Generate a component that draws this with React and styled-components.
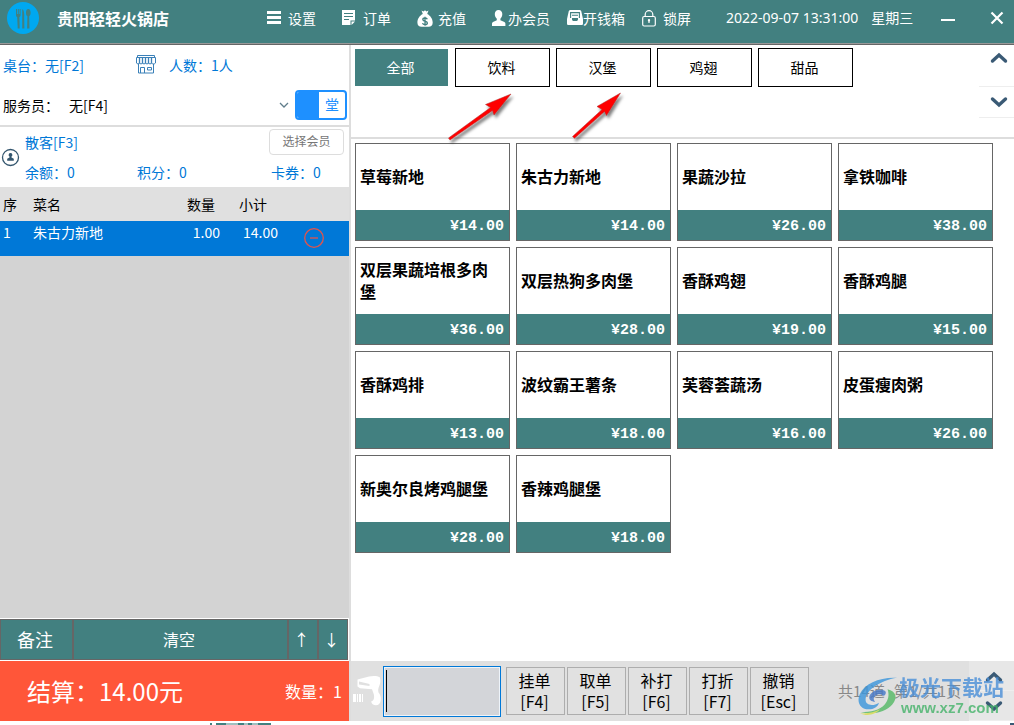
import React, { useState } from "react";
import styled, { createGlobalStyle } from "styled-components";

const teal = "#428080";
const blue = "#0078d7";
const sans = "'Noto Sans CJK SC', 'Noto Sans', sans-serif";

const GlobalStyle = createGlobalStyle`
  * {
    box-sizing: border-box;
  }
  body {
    margin: 0;
    background: #fff;
    color: #000;
    font-family: ${sans};
    font-size: 14px;
    line-height: 20px;
  }
  button, input, select {
    font: inherit;
    color: inherit;
    margin: 0;
    padding: 0;
    border: 0;
    border-radius: 0;
    background: none;
  }
  button {
    cursor: pointer;
  }
  svg {
    display: block;
    flex: none;
  }
`;

const Page = styled.div`
  min-height: 100vh;
  display: flex;
  flex-direction: column;
`;

/* ---------- header ---------- */

const Header = styled.header`
  display: flex;
  align-items: center;
  height: 45px;
  padding: 0 0 8px 7px;
  background: ${teal};
  color: #fff;
  border-bottom: 1px solid #666;
  box-shadow: inset 0 -1px #999;
`;

const Brand = styled.div`
  display: flex;
  align-items: center;
  gap: 18px;
  width: 260px;
`;

const BrandName = styled.h1`
  margin: 0;
  font-size: 16px;
  font-weight: 700;
`;

const Nav = styled.nav`
  display: grid;
  grid-template-columns: repeat(6, 75px);
`;

const NavButton = styled.button`
  display: flex;
  align-items: center;
  gap: ${(p) => (p.$tight ? 0 : 5)}px;
  white-space: nowrap;
`;

const Clock = styled.div`
  display: flex;
  gap: 13px;
  padding-left: 9px;
  font-family: "Noto Sans", ${sans};
  white-space: nowrap;
`;

const WindowControls = styled.div`
  display: flex;
  gap: 15px;
  margin-left: auto;
`;

const WindowButton = styled.button`
  display: grid;
  place-items: center;
  width: 34px;
  height: 34px;
`;

/* ---------- layout ---------- */

const Main = styled.main`
  flex: 1;
  display: flex;
`;

const OrderPanel = styled.section`
  flex: 0 0 351px;
  display: flex;
  flex-direction: column;
  border-right: 2px solid #ddd;
`;

const MenuPanel = styled.section`
  flex: 1;
  min-width: 0;
  display: flex;
  flex-direction: column;
`;

/* ---------- table and staff ---------- */

const TableRow = styled.div`
  display: flex;
  align-items: center;
  height: 41px;
  padding: 0 0 2px 3px;
  color: ${blue};
`;

const LinkButton = styled.button`
  text-align: left;
  white-space: nowrap;
`;

const TableName = styled(LinkButton)`
  width: 133px;
`;

const GuestButton = styled(LinkButton)`
  display: flex;
  align-items: center;
  gap: 13px;
`;

const StaffRow = styled.div`
  display: flex;
  align-items: center;
  height: 41px;
  padding: 0 2px 2px 3px;
  border-bottom: 2px solid #ddd;
`;

const SelectWrap = styled.div`
  position: relative;
  flex: 1;
  margin: 0 4px 0 10px;
`;

const StaffSelect = styled.select`
  appearance: none;
  width: 100%;
  height: 28px;
  outline: none;
`;

const SelectArrow = styled.svg`
  position: absolute;
  right: 2px;
  top: 11px;
  pointer-events: none;
`;

const Switch = styled.label`
  display: grid;
  grid-template-columns: 22px 1fr;
  width: 52px;
  height: 30px;
  border: 2px solid #1e90ff;
  border-radius: 4px;
  overflow: hidden;
  color: #1e90ff;
  cursor: pointer;
`;

const SwitchInput = styled.input`
  appearance: none;
  background: #1e90ff;
  cursor: pointer;
`;

const SwitchText = styled.span`
  display: grid;
  place-items: center;
  padding-bottom: 2px;
`;

/* ---------- member ---------- */

const Member = styled.div`
  display: flex;
  align-items: center;
  gap: 5px;
  height: 60px;
  padding: 0 5px 0 1px;
  color: ${blue};
`;

const MemberInfo = styled.div`
  flex: 1;
  display: flex;
  flex-direction: column;
  justify-content: space-between;
  height: 56px;
`;

const MemberTop = styled.div`
  display: flex;
  align-items: center;
  justify-content: space-between;
`;

const MemberPick = styled.button`
  width: 75px;
  height: 26px;
  padding-bottom: 2px;
  border: 1px solid #ddd;
  border-radius: 4px;
  color: #777;
  font-size: 12px;
`;

const Balances = styled.div`
  display: grid;
  grid-template-columns: 112px 134px 1fr;
  height: 23px;
`;

/* ---------- order lines ---------- */

const Lines = styled.div`
  flex: 1;
  background: #d3d3d3;
`;

const LineTable = styled.table`
  width: 100%;
  table-layout: fixed;
  border-collapse: collapse;
`;

const Th = styled.th`
  width: ${(p) => p.$width}px;
  height: 34px;
  padding: 0 0 0 ${(p) => p.$pad || 0}px;
  background: #e0e0e0;
  font-weight: 400;
  text-align: left;
`;

const Td = styled.td`
  height: 35px;
  padding: 1px ${(p) => p.$end || 0}px 0 ${(p) => p.$pad || 0}px;
  vertical-align: top;
  text-align: ${(p) => (p.$end ? "right" : "left")};
  background: ${blue};
  color: #fff;
`;

const RemoveButton = styled.button`
  display: block;
  margin-top: 6px;
`;

const LineActions = styled.div`
  display: grid;
  grid-template-columns: 73px 1fr 30px 30px;
  height: 43px;
  padding: 1px 1px 1px 0;
`;

const LineAction = styled.button`
  padding: 0 3px 2px 0;
  border: 1px solid #666;
  background: ${teal};
  color: #fff;
  font-size: ${(p) => (p.$large ? 18 : 16)}px;
`;

const Total = styled.button`
  display: flex;
  align-items: center;
  justify-content: space-between;
  height: 60px;
  padding: 0 7px 0 27px;
  background: #ff5639;
  color: #fff;
  font-size: 16px;
`;

const Amount = styled.span`
  font-size: 24px;
`;

/* ---------- categories ---------- */

const CategoryBar = styled.div`
  position: relative;
  display: flex;
  justify-content: space-between;
  height: 94px;
  border-bottom: 2px solid #ddd;
`;

const Categories = styled.div`
  display: flex;
  flex-wrap: wrap;
  align-content: flex-start;
  gap: 6px;
  padding: 3px;
`;

const Category = styled.button`
  width: 95px;
  height: 39px;
  padding: 0 2px 2px 0;
  border: 1px solid ${(p) => (p.$active ? "#fff" : "#000")};
  background: ${(p) => (p.$active ? teal : "#fff")};
  background-clip: padding-box;
  color: ${(p) => (p.$active ? "#fff" : "#000")};
`;

const Pager = styled.div`
  display: flex;
  flex-direction: column;
  width: 35px;
`;

const PagerButton = styled.button`
  display: grid;
  place-items: center;
  height: ${(p) => p.$height}px;
  padding: ${(p) => p.$pad || "0"};
  border-bottom: 1px solid #eee;
`;

const Pointers = styled.svg`
  position: absolute;
  left: 90px;
  top: 40px;
  pointer-events: none;
`;

/* ---------- dishes ---------- */

const DishArea = styled.div`
  flex: 1;
  padding: 4px 21px 4px 4px;
`;

const DishGrid = styled.div`
  display: grid;
  grid-template-columns: repeat(4, 1fr);
  gap: 6px;
`;

const DishCard = styled.button`
  display: flex;
  flex-direction: column;
  border: 1px solid #666;
  text-align: left;
`;

const DishName = styled.span`
  display: flex;
  align-items: center;
  width: 100%;
  height: 66px;
  padding: 0 16px 2px 4px;
  font-size: 16px;
  line-height: 22px;
  font-weight: 700;
`;

const DishPrice = styled.span`
  width: 100%;
  height: 30px;
  padding-right: 5px;
  background: ${teal};
  color: #fff;
  font-family: "Liberation Mono", monospace;
  font-size: 15px;
  line-height: 34px;
  font-weight: 700;
  text-align: right;
`;

/* ---------- footer ---------- */

const Footer = styled.footer`
  position: relative;
  display: flex;
  align-items: center;
  height: 60px;
  padding-left: 2px;
  background: #e0e0e0;
`;

const ScanBox = styled.div`
  position: relative;
  flex: 0 1 118px;
  margin: 0 5px 0 0;
`;

const ScanInput = styled.input`
  display: block;
  width: 100%;
  height: 51px;
  padding: 0 4px;
  border: 1px solid ${blue};
  box-shadow: inset 0 0 0 1px #eef4fa;
  background: #d3d5d9;
  outline: none;
  caret-color: transparent;
`;

const Caret = styled.i`
  position: absolute;
  left: 3px;
  top: 4px;
  width: 1px;
  height: 42px;
  background: #000;
`;

const Commands = styled.div`
  display: flex;
  gap: 2px;
`;

const Command = styled.button`
  display: flex;
  flex-direction: column;
  align-items: center;
  justify-content: center;
  width: 59px;
  height: 48px;
  padding-right: 2px;
  border: 1px solid #adadad;
  background: #e1e1e1;
  font-size: 16px;
  line-height: 21px;
`;

const PageInfo = styled.div`
  display: flex;
  gap: 9px;
  padding-left: 29px;
  color: #888;
  font-size: 15px;
  white-space: nowrap;
`;

const FooterPager = styled.div`
  display: flex;
  flex-direction: column;
  width: 45px;
  margin-left: auto;
  background: #e7e7e7;
`;

const Watermark = styled.div`
  position: absolute;
  right: 10px;
  top: 13px;
  display: flex;
  align-items: center;
  opacity: 0.8;
  pointer-events: none;
`;

const WatermarkText = styled.div`
  display: flex;
  flex-direction: column;
  color: #4a8fd8;
  font-size: 21px;
  line-height: 25px;
  font-weight: 700;
`;

const WatermarkUrl = styled.span`
  padding-left: 2px;
  color: #45b36a;
  font-family: "Liberation Sans", Arial, sans-serif;
  font-size: 15px;
  line-height: 18px;
`;

const BottomEdge = styled.div`
  display: flex;
  justify-content: space-between;
  height: 4px;
  padding: 2px 0 0 210px;
`;

/* ---------- icons ---------- */

const LogoIcon = () => (
  <svg width="32" height="32" viewBox="0 0 32 32">
    <circle cx="16" cy="16" r="16" fill="#00a8f0" />
    <g fill={teal}>
      <path d="M9 7h1v5h.8V7h1v5h.8V7h1v6c0 1-.5 1.800-1.200 2.200l.3 11.300h-2L10.200 15.200C9.400 14.800 9 14 9 13z" />
      <path d="M15.500 7.200c1.500 1 2 4 1.700 8.300l.2 11h-2.200V7.200z" />
      <path d="M21.300 7c1.500 0 2.300 1.600 2.300 3.700 0 1.700-.6 3-1.400 3.600l.3 12.200h-2.400l.3-12.200c-.9-.6-1.400-1.900-1.400-3.600C19 8.600 19.800 7 21.300 7z" />
    </g>
  </svg>
);

const MenuIcon = () => (
  <svg width="16" height="16" viewBox="0 0 16 16" fill="#fff">
    <path d="M0 1h14v3H0zM0 6h14v3H0zM0 11h14v3H0z" />
  </svg>
);

const OrderIcon = () => (
  <svg width="16" height="16" viewBox="0 0 16 16">
    <path d="M0 0h13v10.500H8.500V15H0zM9.500 11.500H13L9.500 15z" fill="#fff" />
    <path d="M2 3.500h9M2 6.500h9M2 9.500h5" stroke={teal} />
  </svg>
);

const BagIcon = () => (
  <svg width="16" height="17" viewBox="0 0 16 17">
    <path
      d="M4.500.5l2 .9L8 .2l1.500 1.200 2-.9L10.200 4c3 1.400 5.500 4.800 5.500 8.500 0 3-1.700 4.300-4 4.300H4.500c-2.400 0-4.100-1.400-4.100-4.300C.4 8.800 2.800 5.400 5.800 4z"
      fill="#fff"
    />
    <path
      d="M10.300 9.300C10 8.400 9.200 8 8 8c-1.300 0-2.200.6-2.200 1.600 0 2.200 4.600 1.100 4.600 3.300 0 1-1 1.700-2.400 1.700-1.300 0-2.200-.5-2.500-1.500M8 6.800v9"
      fill="none"
      stroke={teal}
      strokeWidth="1.300"
    />
  </svg>
);

const PersonIcon = () => (
  <svg width="16" height="17" viewBox="0 0 16 17" fill="#fff">
    <path d="M6.500 0c2.400 0 3.800 1.700 3.800 4.100 0 1.900-.8 3.800-1.900 4.700v1.400l4 1.700c.7.400 1 .9 1 1.700V16H0v-2.400c0-.8.300-1.300 1-1.700l3.800-1.700V8.800C3.600 7.900 2.800 6 2.800 4.100 2.800 1.700 4.100 0 6.500 0z" />
  </svg>
);

const InboxIcon = () => (
  <svg width="16" height="16" viewBox="0 0 16 16">
    <path
      d="M3.500 0h9C13.600 0 14 .6 14.300 1.500L16 9v4.500c0 1-.6 1.500-1.500 1.500h-13C.6 15 0 14.500 0 13.500V9l1.700-7.500C2 .6 2.400 0 3.500 0z"
      fill="#fff"
    />
    <path d="M3.600 8V2.600h8.800V8M5 5.200h6" fill="none" stroke={teal} strokeWidth="1.100" />
    <path d="M5 8h6v1.200c0 1-.8 1.800-1.800 1.800H6.800C5.800 11 5 10.200 5 9.200z" fill={teal} />
  </svg>
);

const LockIcon = () => (
  <svg width="16" height="17" viewBox="0 0 16 17" fill="none" stroke="#fff" strokeWidth="1.200">
    <rect x="0.700" y="6.500" width="12.600" height="9.500" rx="1.500" />
    <path d="M3.200 6.500V4.500a3.800 3.800 0 0 1 7.600 0v2M7 10v3" />
    <circle cx="7" cy="10.300" r="0.600" />
  </svg>
);

const StoreIcon = () => (
  <svg width="20" height="19" viewBox="0 0 20 19" fill="none" stroke="#3a80b8" strokeWidth="1">
    <path d="M1.500 2V.5h17V2M.5 8V2.500h19V8M2.500 9v9h15V9M4.500 18v-5.500h4V18M11.500 12.500h4v2.500h-4z" />
    <path d="M3.500 2.500v6M6.500 2.500v6M9.500 2.500v6M12.500 2.500v6M15.500 2.500v6" strokeWidth="1.300" />
    <path d="M.5 8c.5 1.200 2.500 1.200 3 0 .5 1.200 2.500 1.200 3 0 .5 1.200 2.500 1.200 3 0 .5 1.200 2.500 1.200 3 0 .5 1.200 2.500 1.200 3 0 .5 1.200 3.500 1.200 4 0" />
  </svg>
);

const MemberIcon = () => (
  <svg width="19" height="19" viewBox="0 0 19 19">
    <circle cx="9.500" cy="9.500" r="8" fill="#fff" stroke="#34566e" strokeWidth="1.300" />
    <path d="M9.500 5a1.900 1.900 0 0 1 1 3.500v1l2.300 1.300v2H6.200v-2l2.300-1.300v-1A1.900 1.900 0 0 1 9.500 5z" fill="#34566e" />
  </svg>
);

const MinusIcon = () => (
  <svg width="20" height="20" viewBox="0 0 20 20" fill="none" stroke="#e2544b" strokeWidth="1.300">
    <circle cx="10" cy="10" r="9.300" />
    <path d="M6 10h8" />
  </svg>
);

const Chevron = ({ down }) => (
  <svg width="18" height="12" viewBox="0 0 18 12" fill="none" stroke="#3a5a75" strokeWidth="3.400" strokeLinecap="round">
    <path d={down ? "M2.500 3L9 9l6.500-6" : "M2.500 9L9 3l6.500 6"} />
  </svg>
);

const ScannerIcon = () => (
  <svg width="30" height="34" viewBox="0 0 30 34" fill="#fff">
    <path
      fillRule="evenodd"
      d="M4.500 5.500L16 2.500c4-.9 8.500-.7 10.800.8.900 2.800.6 6-.4 8.300-1 2.200-1.600 4.600-.9 7 1.800 2 2.600 4.600 2.200 7.600-.4 3.200-2.200 5-4.700 5-2.600 0-4.600-1.400-4.800-3.800 3-1 3.300-3.700 2.600-7.200l-1.800-5L7 14.300 4.500 12.500zM6 7.500v3L16.500 12V10z"
    />
    <path d="M0 20h3v8H0zM4 20h1v8H4zM6 20h2v8H6zM9 20h1v8H9z" />
  </svg>
);

const SwirlIcon = () => (
  <svg width="42" height="42" viewBox="0 0 44 42">
    <path d="M42 2C24 1 8 8 3 19c-4 9 1 16 9 16 6 0 10-3 11-7-6 4-14 3-14-3C9 15 24 5 42 2z" fill="#3a96dc" />
    <path d="M13 21c2-5 9-8 15-6 3 1 3 4 0 6-1-2-6-3-9 0-2 2-2 4 0 6-4 0-7-2-6-6z" fill="#4578c8" />
    <path d="M32 14c9 2 11 9 5 16-7 8-20 11-33 8 10 0 20-2 25-8 4-5 5-10 3-16z" fill="#54b965" />
    <path d="M3 39c8 1 15-1 21-4-4 5-13 8-21 4z" fill="#d8dc4c" />
  </svg>
);

/* ---------- data ---------- */

const navItems = [
  { label: "设置", Icon: MenuIcon },
  { label: "订单", Icon: OrderIcon },
  { label: "充值", Icon: BagIcon },
  { label: "办会员", Icon: PersonIcon, tight: true },
  { label: "开钱箱", Icon: InboxIcon, tight: true },
  { label: "锁屏", Icon: LockIcon },
];

const categories = ["全部", "饮料", "汉堡", "鸡翅", "甜品"];

const dishes = [
  ["草莓新地", 14],
  ["朱古力新地", 14],
  ["果蔬沙拉", 26],
  ["拿铁咖啡", 38],
  ["双层果蔬培根多肉堡", 36],
  ["双层热狗多肉堡", 28],
  ["香酥鸡翅", 19],
  ["香酥鸡腿", 15],
  ["香酥鸡排", 13],
  ["波纹霸王薯条", 18],
  ["芙蓉荟蔬汤", 16],
  ["皮蛋瘦肉粥", 26],
  ["新奥尔良烤鸡腿堡", 28],
  ["香辣鸡腿堡", 18],
];

const commands = [
  ["挂单", "[F4]"],
  ["取单", "[F5]"],
  ["补打", "[F6]"],
  ["打折", "[F7]"],
  ["撤销", "[Esc]"],
];

function App() {
  const [active, setActive] = useState("全部");

  return (
    <Page>
      <GlobalStyle />
      <Header>
        <Brand>
          <LogoIcon />
          <BrandName>贵阳轻轻火锅店</BrandName>
        </Brand>
        <Nav>
          {navItems.map(({ label, Icon, tight }) => (
            <NavButton key={label} $tight={tight}>
              <Icon />
              {label}
            </NavButton>
          ))}
        </Nav>
        <Clock>
          <span>2022-09-07 13:31:00</span>
          <span>星期三</span>
        </Clock>
        <WindowControls>
          <WindowButton aria-label="最小化">
            <svg width="14" height="8" viewBox="0 0 14 8">
              <path d="M0 5h14v2H0z" fill="#fff" />
            </svg>
          </WindowButton>
          <WindowButton aria-label="关闭">
            <svg width="14" height="14" viewBox="0 0 14 14">
              <path d="M1.500 1.500l11 11M12.500 1.500l-11 11" stroke="#fff" strokeWidth="2.200" />
            </svg>
          </WindowButton>
        </WindowControls>
      </Header>

      <Main>
        <OrderPanel>
          <TableRow>
            <TableName>桌台：无[F2]</TableName>
            <GuestButton>
              <StoreIcon />
              人数：1人
            </GuestButton>
          </TableRow>
          <StaffRow>
            <label htmlFor="staff">服务员：</label>
            <SelectWrap>
              <StaffSelect id="staff">
                <option>无[F4]</option>
              </StaffSelect>
              <SelectArrow width="10" height="6" viewBox="0 0 10 6">
                <path d="M1 1l4 4 4-4" fill="none" stroke="#607d8b" strokeWidth="1.300" />
              </SelectArrow>
            </SelectWrap>
            <Switch>
              <SwitchInput type="checkbox" defaultChecked />
              <SwitchText>堂</SwitchText>
            </Switch>
          </StaffRow>

          <Member>
            <MemberIcon />
            <MemberInfo>
              <MemberTop>
                <LinkButton>散客[F3]</LinkButton>
                <MemberPick>选择会员</MemberPick>
              </MemberTop>
              <Balances>
                <span>余额：0</span>
                <span>积分：0</span>
                <span>卡券：0</span>
              </Balances>
            </MemberInfo>
          </Member>

          <Lines>
            <LineTable>
              <thead>
                <tr>
                  <Th $width={33} $pad={3}>序</Th>
                  <Th $width={154}>菜名</Th>
                  <Th $width={45}>数量</Th>
                  <Th $width={72} $pad={7}>小计</Th>
                  <Th $width={45} aria-label="删除" />
                </tr>
              </thead>
              <tbody>
                <tr>
                  <Td $pad={3}>1</Td>
                  <Td>朱古力新地</Td>
                  <Td $end={12}>1.00</Td>
                  <Td $end={26}>14.00</Td>
                  <Td>
                    <RemoveButton aria-label="删除">
                      <MinusIcon />
                    </RemoveButton>
                  </Td>
                </tr>
              </tbody>
            </LineTable>
          </Lines>

          <LineActions>
            <LineAction $large>备注</LineAction>
            <LineAction>清空</LineAction>
            <LineAction>↑</LineAction>
            <LineAction>↓</LineAction>
          </LineActions>
          <Total>
            <Amount>结算：14.00元</Amount>
            <span>数量：1</span>
          </Total>
        </OrderPanel>

        <MenuPanel>
          <CategoryBar>
            <Categories>
              {categories.map((name) => (
                <Category key={name} $active={name === active} onClick={() => setActive(name)}>
                  {name}
                </Category>
              ))}
            </Categories>
            <Pager>
              <PagerButton $height={42} $pad="0 0 16px 5px" aria-label="上一页">
                <Chevron />
              </PagerButton>
              <PagerButton $height={31} $pad="0 0 0 5px" aria-label="下一页">
                <Chevron down />
              </PagerButton>
            </Pager>
            <Pointers width="200" height="64" viewBox="441 85 200 64">
              <defs>
                <filter id="shade" x="-20%" y="-20%" width="150%" height="150%">
                  <feDropShadow dx="2" dy="3" stdDeviation="1.500" floodColor="#000" floodOpacity="0.500" />
                </filter>
              </defs>
              <g fill="#f00" stroke="#a33" strokeWidth="0.500" filter="url(#shade)">
                <path d="M511 94L485.500 104.500 490.500 107.500 448.500 138 450 140 492.500 110.500 494 115z" />
                <path d="M620.500 93L597 106.500 602 109.500 572.500 136.500 574.500 138.300 604.500 111.500 606.500 115.500z" />
              </g>
            </Pointers>
          </CategoryBar>

          <DishArea>
            <DishGrid>
              {dishes.map(([name, price]) => (
                <DishCard key={name}>
                  <DishName>{name}</DishName>
                  <DishPrice>¥{price.toFixed(2)}</DishPrice>
                </DishCard>
              ))}
            </DishGrid>
          </DishArea>

          <Footer>
            <ScannerIcon />
            <ScanBox>
              <ScanInput aria-label="扫码" />
              <Caret />
            </ScanBox>
            <Commands>
              {commands.map(([name, key]) => (
                <Command key={name}>
                  <span>{name}</span>
                  <span>{key}</span>
                </Command>
              ))}
            </Commands>
            <PageInfo>
              <span>共14道</span>
              <span>第1/共1页</span>
            </PageInfo>
            <FooterPager>
              <PagerButton $height={30} $pad="2px 0 0 5px" aria-label="上一页">
                <Chevron />
              </PagerButton>
              <PagerButton $height={30} $pad="0 0 0 5px" aria-label="下一页">
                <Chevron down />
              </PagerButton>
            </FooterPager>
            <Watermark>
              <SwirlIcon />
              <WatermarkText>
                极光下载站
                <WatermarkUrl>www.xz7.com</WatermarkUrl>
              </WatermarkText>
            </Watermark>
          </Footer>
        </MenuPanel>
      </Main>
      <BottomEdge>
        <svg width="62" height="2" viewBox="0 0 62 2">
          <path d="M0 0h2v2H0zM6 0h55v2H6z" fill={teal} />
          <path d="M16 1h12M34 1h4M42 1h6" stroke="#fff" />
        </svg>
        <svg width="4" height="2" viewBox="0 0 4 2">
          <path d="M0 0h4v2H0z" fill="#3a5a75" />
        </svg>
      </BottomEdge>
    </Page>
  );
}

export default App;
